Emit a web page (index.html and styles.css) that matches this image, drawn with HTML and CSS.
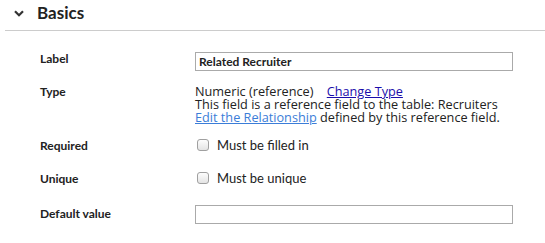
FILE: index.html
```html
<!doctype html>
<html lang="en">
  <head>
    <meta charset="UTF-8" />
    <title>Field settings</title>
    <link rel="stylesheet" href="styles.css">
  </head>
  <body>
    <div class="section">
      <div class="section-head">
        <svg class="chevron" width="10" height="7" viewBox="0 0 10 7">
          <path d="M1 1.2 L5 5.2 L9 1.2" fill="none" stroke="#333" stroke-width="2.2" />
        </svg>
        <h2>Basics</h2>
      </div>

      <div class="fields">
        <div class="field-row row-label">
          <label class="field-name" for="label">Label</label>
          <div class="field-value">
            <input type="text" id="label" class="text-input" value="Related Recruiter" />
          </div>
        </div>

        <div class="field-row row-type">
          <div class="field-name">Type</div>
          <div class="field-value type-info">
            <div>Numeric (reference) <a href="#" class="change-link">Change Type</a></div>
            <div>This field is a reference field to the table: Recruiters</div>
            <div><a href="#" class="edit-link">Edit the Relationship</a> defined by this reference field.</div>
          </div>
        </div>

        <div class="field-row row-check">
          <div class="field-name">Required</div>
          <label class="field-value check">
            <input type="checkbox" /> <span>Must be filled in</span>
          </label>
        </div>

        <div class="field-row row-check">
          <div class="field-name">Unique</div>
          <label class="field-value check">
            <input type="checkbox" /> <span>Must be unique</span>
          </label>
        </div>

        <div class="field-row row-default">
          <label class="field-name" for="default">Default value</label>
          <div class="field-value">
            <input type="text" id="default" class="text-input" />
          </div>
        </div>
      </div>
    </div>
  </body>
</html>
```

FILE: styles.css
```css
* {
  margin: 0;
  padding: 0;
  box-sizing: border-box;
}

body {
  font-family: Lato, "Liberation Sans", sans-serif;
  color: #222;
  background: #fff;
}

.section-head {
  display: flex;
  align-items: center;
  gap: 13px;
  height: 31px;
  padding-left: 9px;
  margin-left: 5px;
  border-bottom: 1px solid #ccc;
  padding-bottom: 6px;
}

.chevron {
  margin-top: 2px;
}

.section-head h2 {
  font-size: 17px;
  font-weight: 700;
  color: #222;
}

.fields {
  padding: 19px 0 0 40px;
}

.field-row {
  display: grid;
  grid-template-columns: 155px 318px;
}

.field-name {
  font-size: 12px;
  font-weight: 700;
  color: #222;
}

.row-label .field-name {
  padding-top: 1px;
}

.text-input {
  width: 318px;
  height: 19px;
  border: 1px solid #aaa;
  padding: 0 3px;
  font-family: Lato, sans-serif;
  font-size: 12px;
  font-weight: 700;
  color: #222;
}

.row-type {
  margin-top: 14px;
}

.row-type .field-name {
  line-height: 13px;
}

.type-info {
  font-family: "Open Sans", sans-serif;
  font-size: 12.7px;
  line-height: 13px;
  color: #222;
}

.change-link {
  color: #1a0dab;
  margin-left: 10px;
}

.edit-link {
  color: #3b7dd8;
}

.row-check {
  margin-top: 13px;
  align-items: center;
}

.row-check + .row-check {
  margin-top: 17px;
}

.check {
  display: flex;
  align-items: center;
  gap: 8px;
  font-size: 13px;
  color: #222;
}

.check input {
  appearance: none;
  width: 12px;
  height: 12px;
  margin-left: 2px;
  border: 1px solid #a0a0a0;
  border-radius: 3px;
  background: linear-gradient(#fdfdfd, #e4e4e4);
}

.row-default {
  margin-top: 17px;
  align-items: center;
}
```
